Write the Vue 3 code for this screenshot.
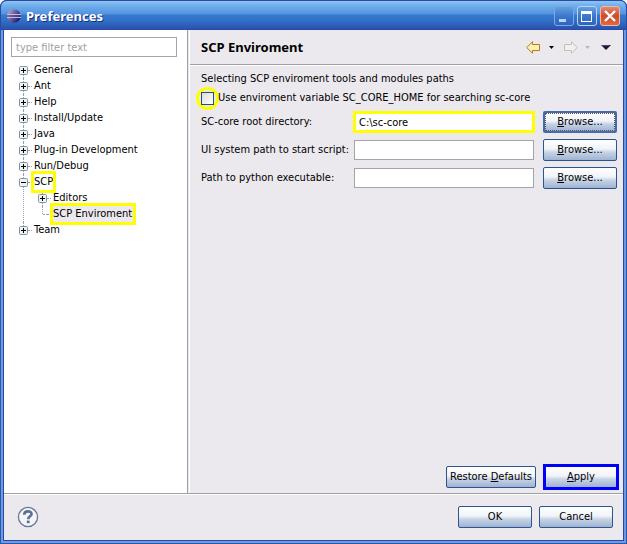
<script setup>
import { ref } from 'vue'

const filter = ref('')
const useVariable = ref(false)
const tree = [
  { label: 'General', state: 'closed' },
  { label: 'Ant', state: 'closed' },
  { label: 'Help', state: 'closed' },
  { label: 'Install/Update', state: 'closed' },
  { label: 'Java', state: 'closed' },
  { label: 'Plug-in Development', state: 'closed' },
  { label: 'Run/Debug', state: 'closed' },
  {
    label: 'SCP',
    state: 'open',
    marked: true,
    children: [
      { label: 'Editors', state: 'closed' },
      { label: 'SCP Enviroment', state: 'leaf', marked: true, selected: true },
    ],
  },
  { label: 'Team', state: 'closed' },
]
const paths = ref([
  { id: 'core', label: 'SC-core root directory:', value: 'C:\\sc-core', marked: true },
  { id: 'ui', label: 'UI system path to start script:', value: '' },
  { id: 'python', label: 'Path to python executable:', value: '' },
])
</script>

<template>
  <div class="window">
    <header class="titlebar">
      <svg class="logo" viewBox="0 0 16 16" aria-hidden="true">
        <defs>
          <linearGradient id="ball" x1="0" y1="0" x2="1" y2="0.6">
            <stop offset="0" stop-color="#e0b4c8" />
            <stop offset="0.45" stop-color="#7a68a8" />
            <stop offset="1" stop-color="#1c1a66" />
          </linearGradient>
        </defs>
        <circle cx="8" cy="8" r="6.8" fill="url(#ball)" />
        <path d="M1 6.5H15M1 9.5H15" stroke="#c3bfe0" stroke-width="1" />
        <path d="M1 8H15" stroke="#4d4795" stroke-width="1" />
      </svg>
      <h1>Preferences</h1>
      <div class="controls">
        <button type="button" class="ctl min" aria-label="Minimize">
          <svg viewBox="0 0 20 20"><path d="M5 13H12V16H5Z" fill="#b9d3f5" /></svg>
        </button>
        <button type="button" class="ctl max" aria-label="Maximize">
          <svg viewBox="0 0 20 20"><path d="M4 5H15V16H4ZM5 8V15H14V8Z" fill="#fff" fill-rule="evenodd" /></svg>
        </button>
        <button type="button" class="ctl close" aria-label="Close">
          <svg viewBox="0 0 20 20"><path d="M5 5L15 15M15 5L5 15" stroke="#fff" stroke-width="2.4" /></svg>
        </button>
      </div>
    </header>

    <div class="body">
      <aside class="side">
        <input v-model="filter" class="filter" type="text" placeholder="type filter text" aria-label="Filter" />
        <ul class="tree">
          <li v-for="n in tree" :key="n.label">
            <div class="node">
              <svg class="box" viewBox="0 0 9 9" aria-hidden="true">
                <rect x="0.5" y="0.5" width="8" height="8" rx="1" fill="#f3f1ec" stroke="#7898b5" />
                <path :d="n.state === 'open' ? 'M2 4.5H7' : 'M2 4.5H7M4.5 2V7'" stroke="#000" />
              </svg>
              <span class="dots"></span>
              <span class="label" :class="{ marked: n.marked }">{{ n.label }}</span>
            </div>
            <ul v-if="n.children" class="branch">
              <li v-for="c in n.children" :key="c.label">
                <div class="node">
                  <svg v-if="c.state === 'closed'" class="box" viewBox="0 0 9 9" aria-hidden="true">
                    <rect x="0.5" y="0.5" width="8" height="8" rx="1" fill="#f3f1ec" stroke="#7898b5" />
                    <path d="M2 4.5H7M4.5 2V7" stroke="#000" />
                  </svg>
                  <span v-else class="elbow"></span>
                  <span class="dots"></span>
                  <span class="label" :class="{ marked: c.marked, selected: c.selected }">{{ c.label }}</span>
                </div>
              </li>
            </ul>
          </li>
        </ul>
      </aside>

      <main class="page">
        <div class="heading">
          <h2>SCP Enviroment</h2>
          <nav class="nav">
            <button type="button" aria-label="Back">
              <svg width="15" height="13" viewBox="0 0 15 13">
                <path d="M0.7 6.5L6.5 0.8V3.5H13.5V9.5H6.5V12.2Z" fill="#fdf0b4" stroke="#b87a14" />
              </svg>
            </button>
            <button type="button" aria-label="Back history">
              <svg width="5" height="3" viewBox="0 0 5 3"><path d="M0 0H5L2.5 3Z" fill="#000" /></svg>
            </button>
            <button type="button" class="forward" aria-label="Forward">
              <svg width="15" height="13" viewBox="0 0 15 13">
                <path d="M14.3 6.5L8.5 0.8V3.5H1.5V9.5H8.5V12.2Z" fill="#f0f0ec" stroke="#c0c0bc" />
              </svg>
            </button>
            <button type="button" aria-label="Forward history">
              <svg width="5" height="3" viewBox="0 0 5 3"><path d="M0 0H5L2.5 3Z" fill="#b8b8b4" /></svg>
            </button>
            <button type="button" class="menu" aria-label="Menu">
              <svg width="10" height="5" viewBox="0 0 10 5"><path d="M0 0H10L5 5Z" fill="#1c1836" /><path d="M1 0.5H8" stroke="#50467e" /></svg>
            </button>
          </nav>
        </div>

        <form class="form" @submit.prevent>
          <p>Selecting SCP enviroment tools and modules paths</p>
          <label class="check">
            <span class="ring"><input v-model="useVariable" type="checkbox" /></span>
            <span>Use enviroment variable SC_CORE_HOME for searching sc-core</span>
          </label>
          <div class="paths">
            <template v-for="p in paths" :key="p.id">
              <label :for="p.id">{{ p.label }}</label>
              <input :id="p.id" v-model="p.value" type="text" :class="{ marked: p.marked }" />
              <button type="button" class="btn" :class="{ focused: p.marked }"><span><u>B</u>rowse...</span></button>
            </template>
          </div>
          <div class="actions">
            <button type="button" class="btn"><span>Restore <u>D</u>efaults</span></button>
            <button type="button" class="btn apply"><span><u>A</u>pply</span></button>
          </div>
        </form>
      </main>
    </div>

    <footer class="footer">
      <button type="button" class="help" aria-label="Help">
        <svg viewBox="0 0 22 22">
          <circle cx="11" cy="11" r="9.6" fill="#f4f4f8" stroke="#647896" stroke-width="1.3" />
          <path d="M7.2 8.8C7.2 4.2 14.8 4.4 14.6 8.2C14.4 10.4 11.2 10.4 11.2 13.2" fill="none" stroke="#5a6f94" stroke-width="2.6" />
          <rect x="9.8" y="14.6" width="2.8" height="2.6" fill="#5a6f94" />
        </svg>
      </button>
      <button type="button" class="btn">OK</button>
      <button type="button" class="btn">Cancel</button>
    </footer>
  </div>
</template>

<style>
body {
  margin: 0;
  background: #f4f4fb;
}
</style>

<style scoped>
* {
  box-sizing: border-box;
}
.window {
  display: flex;
  flex-direction: column;
  min-height: 100vh;
  padding: 0 4px 4px;
  border-radius: 7px 7px 0 0;
  background: #2648a0;
  box-shadow: inset 0 0 0 1px #2b56ac, inset 0 0 0 3px #6a9ce4;
  color: #000;
  font: 11px/16px "DejaVu Sans Condensed", "DejaVu Sans", sans-serif;
}
button,
input {
  font: inherit;
  color: inherit;
}
button {
  padding: 0;
  border: 0;
  background: none;
}
h1,
h2,
p,
ul {
  margin: 0;
  padding: 0;
  list-style: none;
}
.titlebar {
  display: flex;
  align-items: center;
  height: 30px;
  margin: 0 -4px;
  padding: 2px 6px 0 5px;
  border: 1px solid #2a4aa6;
  border-radius: 7px 7px 0 0;
  background: linear-gradient(#8fc4f0 0, #6cadea 5px, #5c98e4 11px, #5694de 13px, #3479cc 14px, #3172c8 19px, #2a51ae 28px);
}
.logo {
  width: 16px;
  height: 16px;
}
h1 {
  flex: 1;
  padding-left: 4px;
  color: #fff;
  font: bold 13px/18px "Noto Sans", "Open Sans", sans-serif;
  text-shadow: 1px 1px 0 #1b2f80;
}
.controls {
  display: flex;
  gap: 3px;
}
.ctl {
  width: 20px;
  height: 20px;
  border: 1px solid #b7d4f6;
  border-radius: 3px;
  background: linear-gradient(#659fe2, #3c78cc 50%, #2f65bd);
}
.ctl svg {
  display: block;
  margin: -1px;
  width: 20px;
  height: 20px;
}
.min {
  border-color: #79a8e4;
}
.close {
  border-color: #f0b8a8;
  background: linear-gradient(#e08a76, #d24a24 50%, #dd6a44);
}
.body {
  flex: 1;
  display: flex;
  background: #ebe9ed;
}
.side {
  flex: 0 0 184px;
  padding: 7px 10px 7px 7px;
  border-right: 1px solid #a0a0a4;
  background: #fff;
}
input[type="text"] {
  display: block;
  width: 100%;
  min-width: 0;
  height: 20px;
  padding: 0 4px;
  border: 1px solid #a5a5a9;
  border-radius: 0;
  background: #fff;
  outline: none;
}
.filter::placeholder {
  color: #a0a0a4;
  opacity: 1;
}
.tree {
  padding: 5px 0 0 8px;
}
.tree li {
  position: relative;
}
.tree li::before {
  content: "";
  position: absolute;
  top: 0;
  bottom: 0;
  left: 4px;
  border-left: 1px dotted #a0a0a4;
}
.tree > li:last-child::before,
.branch > li:last-child::before {
  bottom: auto;
  height: 8px;
}
.tree > li:first-child::before {
  top: 8px;
}
.node {
  display: flex;
  align-items: center;
  height: 16px;
}
.box {
  position: relative;
  width: 9px;
  height: 9px;
}
.elbow {
  width: 4px;
  margin-left: 5px;
  border-top: 1px dotted #a0a0a4;
}
.dots {
  width: 4px;
  margin-right: 2px;
  border-top: 1px dotted #a0a0a4;
}
.label {
  white-space: nowrap;
}
.branch {
  padding-left: 19px;
}
.label.selected {
  padding-right: 1px;
  background: #ebe9ed;
}
.label.marked {
  z-index: 1;
  outline: 3px solid #ff0;
}
.page {
  flex: 1;
  display: flex;
  flex-direction: column;
  margin-left: 1px;
  border-left: 1px solid #fff;
}
.heading {
  display: flex;
  align-items: center;
  justify-content: space-between;
  height: 35px;
  padding: 0 12px 0 11px;
  border-bottom: 1px solid #a0a0a4;
}
h2 {
  font: bold 13px/18px "Noto Sans", "DejaVu Sans Condensed", sans-serif;
}
.nav {
  display: flex;
  align-items: center;
  gap: 7px;
}
.nav svg {
  display: block;
}
.nav button:first-child {
  margin-right: 1px;
}
.forward {
  margin-left: 2px;
}
.menu {
  margin-left: 4px;
}
.form {
  flex: 1;
  display: flex;
  flex-direction: column;
  padding: 5px 4px 3px 11px;
  border-top: 1px solid #fff;
}
.check {
  display: flex;
  align-items: center;
  gap: 4px;
  height: 22px;
}
.ring {
  display: grid;
  flex: none;
  width: 23px;
  height: 23px;
  margin: 0 -5px;
  place-items: center;
  border: 3px solid #ff0;
  border-radius: 50%;
}
.ring input {
  appearance: none;
  width: 13px;
  height: 13px;
  margin: 0;
  border: 1px solid #1c5180;
  background: linear-gradient(135deg, #dcdcd7, #fff);
}
.paths {
  display: grid;
  grid-template-columns: 144px 1fr 74px;
  align-items: center;
  column-gap: 9px;
  row-gap: 6px;
  padding: 2px 2px 0 0;
}
.paths label {
  white-space: nowrap;
}
input[type="text"].marked {
  outline: 3px solid #ff0;
  outline-offset: -2px;
}
.btn {
  min-width: 74px;
  height: 22px;
  padding: 0 3px;
  border: 1px solid #2c5590;
  border-radius: 2px;
  background: linear-gradient(#fff, #f0f3f8 45%, #c8d4e6 60%, #9fb3d2);
  white-space: nowrap;
}
.focused {
  padding: 0;
  border: 2px solid #3f6cba;
}
.focused span {
  display: block;
  height: 18px;
  border: 1px dotted #705030;
}
.actions {
  display: flex;
  align-items: center;
  justify-content: flex-end;
  gap: 7px;
  margin-top: auto;
}
.apply {
  height: 26px;
  min-width: 76px;
  border: 3px solid #00f;
  border-radius: 0;
}
.footer {
  display: flex;
  align-items: center;
  gap: 7px;
  height: 47px;
  padding: 0 10px 0 13px;
  border-top: 1px solid #a0a0a4;
  background: #ebe9ed;
  box-shadow: inset 0 1px #fff;
}
.help {
  width: 22px;
  height: 22px;
  margin-right: auto;
}
.help svg {
  display: block;
}
</style>
